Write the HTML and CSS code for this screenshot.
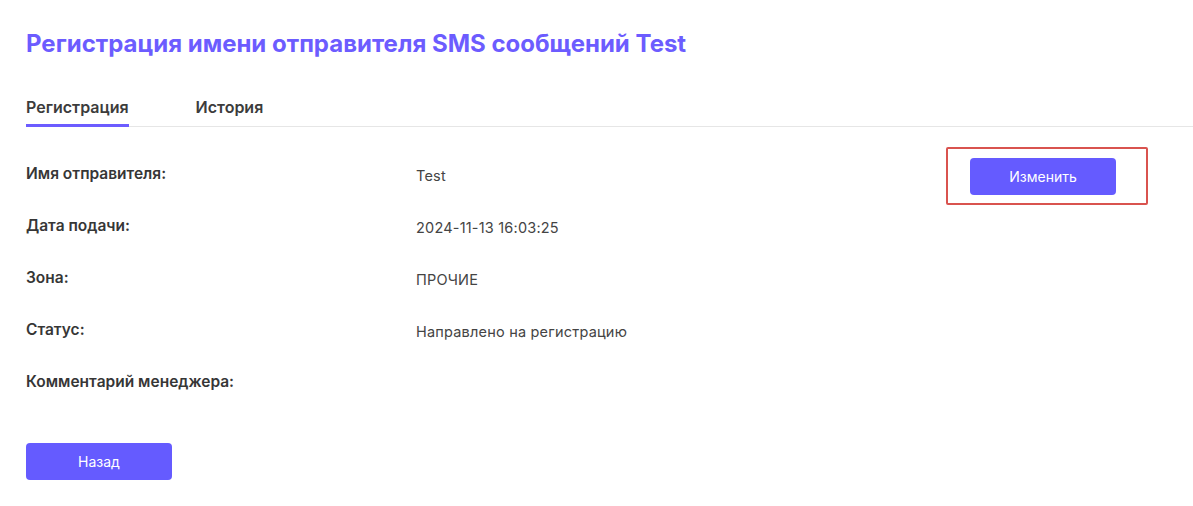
FILE: index.html
```html
<!DOCTYPE html>
<html lang="ru">
<head>
  <meta charset="UTF-8" />
  <meta name="viewport" content="width=device-width, initial-scale=1" />
  <title>Регистрация имени отправителя</title>
  <link rel="stylesheet" href="styles.css">
</head>
<body>
  <div class="page">
    <h1 class="title">Регистрация имени отправителя SMS сообщений Test</h1>

    <div class="tabs">
      <a class="tab active" href="#">Регистрация</a>
      <a class="tab" href="#">История</a>
    </div>

    <div class="details">
      <div class="row">
        <div class="label">Имя отправителя:</div>
        <div class="value">Test</div>
        <div class="actions">
          <div class="highlight">
            <button class="btn btn-edit">Изменить</button>
          </div>
        </div>
      </div>
      <div class="row">
        <div class="label">Дата подачи:</div>
        <div class="value">2024-11-13 16:03:25</div>
      </div>
      <div class="row">
        <div class="label">Зона:</div>
        <div class="value">ПРОЧИЕ</div>
      </div>
      <div class="row">
        <div class="label">Статус:</div>
        <div class="value">Направлено на регистрацию</div>
      </div>
      <div class="row">
        <div class="label">Комментарий менеджера:</div>
        <div class="value"></div>
      </div>
    </div>

    <button class="btn btn-back">Назад</button>
  </div>
</body>
</html>
```

FILE: styles.css
```css
* {
  margin: 0;
  padding: 0;
  box-sizing: border-box;
}

body {
  font-family: 'Inter', 'Noto Sans', sans-serif;
  background: #ffffff;
  color: #333333;
}

.page {
  padding: 30px 0 0 26px;
}

.title {
  font-size: 24px;
  font-weight: 700;
  color: #6c5cff;
  line-height: 28px;
}

/* Вкладки */
.tabs {
  display: flex;
  gap: 67px;
  margin-top: 39px;
  border-bottom: 1px solid #e6e6e6;
}

.tab {
  font-size: 16px;
  font-weight: 600;
  color: #3c3c3c;
  text-decoration: none;
  padding-bottom: 7px;
  border-bottom: 3px solid transparent;
  margin-bottom: -1px;
}

.tab.active {
  border-bottom-color: #6c5cff;
}

.details {
  margin-top: 23px;
}

.row {
  display: grid;
  grid-template-columns: 390px 1fr 247px;
  align-items: start;
  height: 52px;
}

.label {
  font-size: 15.5px;
  font-weight: 600;
  color: #363636;
  line-height: 48px;
}

.value {
  font-size: 14.5px;
  color: #444444;
  letter-spacing: 0.2px;
  line-height: 52px;
}

.highlight {
  width: 202px;
  height: 58px;
  border: 2px solid #d9534f;
  border-radius: 2px;
  padding: 9px 0 0 22px;
  margin-top: -3px;
}

.btn {
  background-color: #655bff;
  border: none;
  color: #ffffff;
  font-family: inherit;
  font-size: 14px;
  border-radius: 4px;
  cursor: pointer;
  width: 146px;
  height: 37px;
}

.btn-back {
  margin-top: 33px;
}
```
